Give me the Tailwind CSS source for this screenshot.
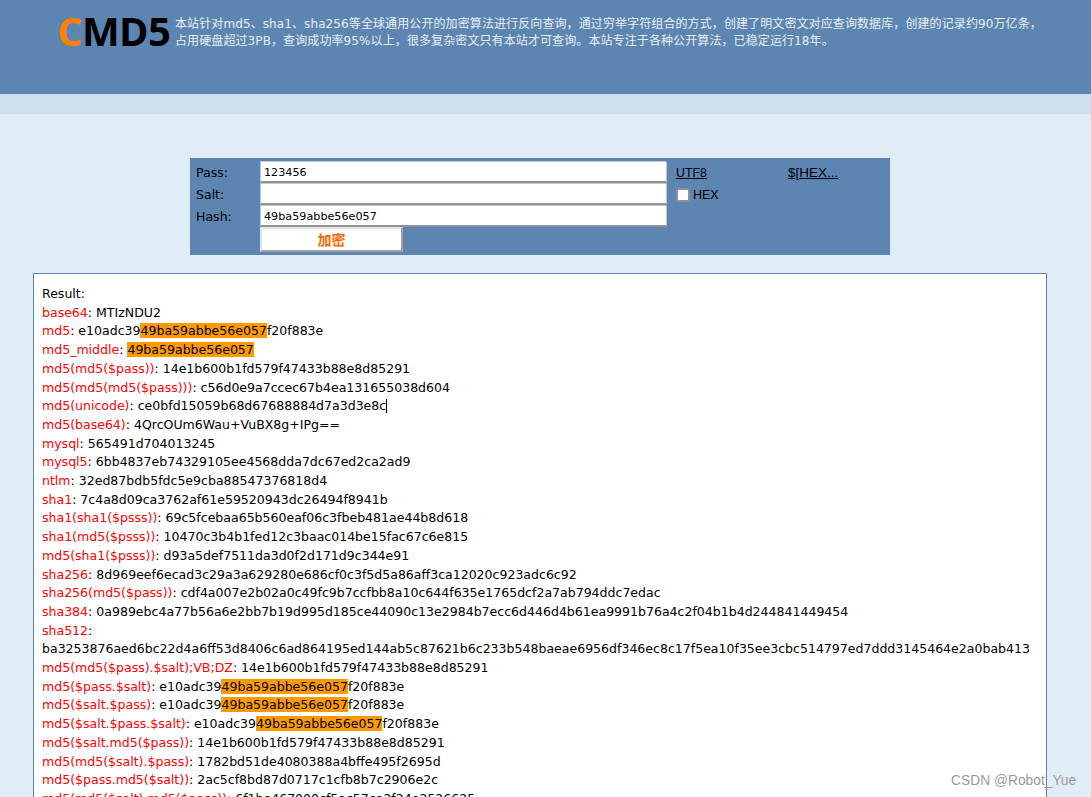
<!DOCTYPE html>
<html lang="zh">
<head>
    <meta charset="UTF-8">
    <title>CMD5</title>
    <script src="https://cdn.jsdelivr.net/npm/@tailwindcss/browser@4"></script>
</head>
<body class="relative h-[797px] overflow-hidden bg-[#e1edf6] text-black font-['DejaVu_Sans','Noto_Sans_CJK_SC',sans-serif] text-[12.54px]">
    <!-- Header -->
    <header class="h-[94px] bg-[#5c86b1] flex items-start pl-[57px] pt-[8px]">
        <div class="w-[118px] font-['Open_Sans',sans-serif] font-bold text-[40px] leading-[46px] tracking-[-0.6px] whitespace-nowrap"><span class="text-[#ff8000]">C</span>MD5</div>
        <p class="w-[880px] pt-[8px] text-[12px] leading-[17px] tracking-[0.1px] text-[#e8eef4]">本站针对md5、sha1、sha256等全球通用公开的加密算法进行反向查询，通过穷举字符组合的方式，创建了明文密文对应查询数据库，创建的记录约90万亿条，<br>占用硬盘超过3PB，查询成功率95%以上，很多复杂密文只有本站才可查询。本站专注于各种公开算法，已稳定运行18年。</p>
    </header>
    <div class="h-[20px] bg-[#cce0ef]"></div>

    <!-- Form -->
    <form class="mt-[44px] ml-[190px] w-[700px] h-[97px] bg-[#5c86b1] pt-[3px] pl-[6px] grid grid-cols-[64px_407px_121px_1fr] grid-rows-[22px_22px_22px_25px] items-center">
        <label class="pt-[2px]">Pass:</label>
        <input value="123456" class="h-full w-full bg-white px-[3px] pt-[1px] text-[11.2px] border-x border-t border-[#c5c5cf] border-b-2 border-b-[#8f8f9d] rounded-tr-[2px] rounded-br-[2px] outline-none">
        <a class="ml-[9px] pt-[2px] underline text-[12.3px] font-['Liberation_Sans',sans-serif]">UTF8</a>
        <a class="pt-[2px] underline text-[13.5px] font-['Liberation_Sans',sans-serif]">$[HEX...</a>

        <label class="pt-[2px]">Salt:</label>
        <input class="h-full w-full bg-white px-[3px] text-[11.2px] border-x border-t border-[#c5c5cf] border-b-2 border-b-[#8f8f9d] rounded-tr-[2px] rounded-br-[2px] outline-none">
        <div class="ml-[9px] pt-[2px] flex items-center gap-[3px] text-[12.5px] font-['Liberation_Sans',sans-serif]">
            <span class="w-[14px] h-[14px] bg-white border-2 border-[#8f8f9d] rounded-[2px]"></span>HEX
        </div>
        <div></div>

        <label class="pt-[2px]">Hash:</label>
        <input value="49ba59abbe56e057" class="h-full w-full bg-white px-[3px] pt-[1px] text-[11.2px] border-x border-t border-[#c5c5cf] border-b-2 border-b-[#8f8f9d] rounded-tr-[2px] rounded-br-[2px] outline-none">
        <div></div>
        <div></div>

        <div></div>
        <button type="button" class="h-full w-[143px] pb-[2px] bg-white border-2 border-t-[#e3e3e3] border-l-[#e3e3e3] border-r-[#a0a0a0] border-b-[#a0a0a0] text-[#ff6600] font-bold text-[14px] leading-none font-['Noto_Sans_CJK_SC',sans-serif]">加密</button>
    </form>

    <!-- Result -->
    <div class="mt-[18px] mx-[33px] w-[1014px] h-[600px] bg-white border border-[#5c86b1] pt-[11px] px-[8px] leading-[18.7px] break-words">
        <div>Result:</div>
        <div><span class="text-[#ff0000]">base64</span>: MTIzNDU2</div>
        <div><span class="text-[#ff0000]">md5</span>: e10adc39<span class="bg-[#ff9900]">49ba59abbe56e057</span>f20f883e</div>
        <div><span class="text-[#ff0000]">md5_middle</span>: <span class="bg-[#ff9900]">49ba59abbe56e057</span></div>
        <div><span class="text-[#ff0000]">md5(md5($pass))</span>: 14e1b600b1fd579f47433b88e8d85291</div>
        <div><span class="text-[#ff0000]">md5(md5(md5($pass)))</span>: c56d0e9a7ccec67b4ea131655038d604</div>
        <div><span class="text-[#ff0000]">md5(unicode)</span>: ce0bfd15059b68d67688884d7a3d3e8c<span class="inline-block w-px h-[14px] bg-black align-[-3px]"></span></div>
        <div><span class="text-[#ff0000]">md5(base64)</span>: 4QrcOUm6Wau+VuBX8g+IPg==</div>
        <div><span class="text-[#ff0000]">mysql</span>: 565491d704013245</div>
        <div><span class="text-[#ff0000]">mysql5</span>: 6bb4837eb74329105ee4568dda7dc67ed2ca2ad9</div>
        <div><span class="text-[#ff0000]">ntlm</span>: 32ed87bdb5fdc5e9cba88547376818d4</div>
        <div><span class="text-[#ff0000]">sha1</span>: 7c4a8d09ca3762af61e59520943dc26494f8941b</div>
        <div><span class="text-[#ff0000]">sha1(sha1($psss))</span>: 69c5fcebaa65b560eaf06c3fbeb481ae44b8d618</div>
        <div><span class="text-[#ff0000]">sha1(md5($psss))</span>: 10470c3b4b1fed12c3baac014be15fac67c6e815</div>
        <div><span class="text-[#ff0000]">md5(sha1($psss))</span>: d93a5def7511da3d0f2d171d9c344e91</div>
        <div><span class="text-[#ff0000]">sha256</span>: 8d969eef6ecad3c29a3a629280e686cf0c3f5d5a86aff3ca12020c923adc6c92</div>
        <div><span class="text-[#ff0000]">sha256(md5($pass))</span>: cdf4a007e2b02a0c49fc9b7ccfbb8a10c644f635e1765dcf2a7ab794ddc7edac</div>
        <div><span class="text-[#ff0000]">sha384</span>: 0a989ebc4a77b56a6e2bb7b19d995d185ce44090c13e2984b7ecc6d446d4b61ea9991b76a4c2f04b1b4d244841449454</div>
        <div><span class="text-[#ff0000]">sha512</span>:<br>ba3253876aed6bc22d4a6ff53d8406c6ad864195ed144ab5c87621b6c233b548baeae6956df346ec8c17f5ea10f35ee3cbc514797ed7ddd3145464e2a0bab413</div>
        <div><span class="text-[#ff0000]">md5(md5($pass).$salt);VB;DZ</span>: 14e1b600b1fd579f47433b88e8d85291</div>
        <div><span class="text-[#ff0000]">md5($pass.$salt)</span>: e10adc39<span class="bg-[#ff9900]">49ba59abbe56e057</span>f20f883e</div>
        <div><span class="text-[#ff0000]">md5($salt.$pass)</span>: e10adc39<span class="bg-[#ff9900]">49ba59abbe56e057</span>f20f883e</div>
        <div><span class="text-[#ff0000]">md5($salt.$pass.$salt)</span>: e10adc39<span class="bg-[#ff9900]">49ba59abbe56e057</span>f20f883e</div>
        <div><span class="text-[#ff0000]">md5($salt.md5($pass))</span>: 14e1b600b1fd579f47433b88e8d85291</div>
        <div><span class="text-[#ff0000]">md5(md5($salt).$pass)</span>: 1782bd51de4080388a4bffe495f2695d</div>
        <div><span class="text-[#ff0000]">md5($pass.md5($salt))</span>: 2ac5cf8bd87d0717c1cfb8b7c2906e2c</div>
        <div><span class="text-[#ff0000]">md5(md5($salt).md5($pass))</span>: 6f1be467000cf5ac57ca2f24e2526625</div>
    </div>

    <!-- Watermark -->
    <div class="absolute left-[951px] top-[773px] font-['Liberation_Sans',sans-serif] text-[13.8px] leading-[16px] text-[#9a9a9a]">CSDN @Robot_Yue</div>
</body>
</html>
